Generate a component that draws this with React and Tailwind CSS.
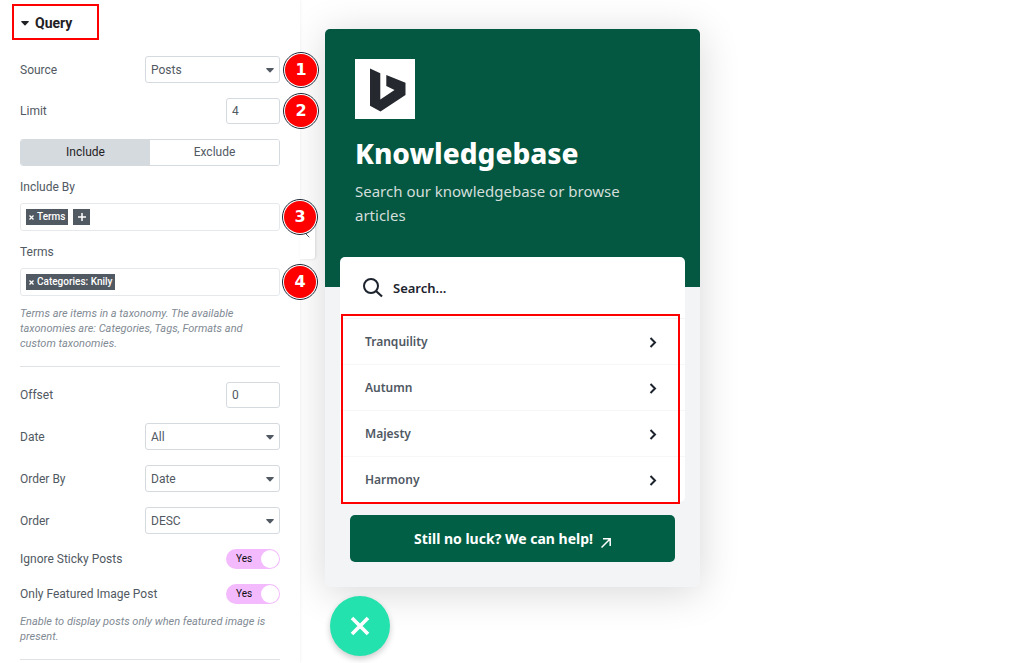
import { useState } from "react";

const posts = ["Tranquility", "Autumn", "Majesty", "Harmony"];

function Badge({ children }) {
  return (
    <span className="absolute left-full top-1/2 z-20 ml-[3px] flex size-9 -translate-y-1/2 items-center justify-center rounded-full border border-[#1f2937] bg-white p-px">
      <span className="flex size-full items-center justify-center rounded-full bg-[#fe0000] font-['DejaVu_Sans',sans-serif] text-base font-bold leading-none text-white">
        {children}
      </span>
    </span>
  );
}

function Caret({ className }) {
  return (
    <svg viewBox="0 0 8 5" className={`h-[5px] w-2 ${className}`}>
      <path d="M0.6 0h6.8q.7.2.2.9L4.5 4.3q-.5.4-1 0L.4.9Q-.1.2.6 0z" />
    </svg>
  );
}

function SelectRow({ id, label, options, badge }) {
  return (
    <div className="relative flex items-center justify-between">
      <label htmlFor={id}>{label}</label>
      <div className="relative w-[135px]">
        <select
          id={id}
          className="block h-[27px] w-full appearance-none rounded-[3px] border border-[#d5dadf] bg-white px-[5px]"
        >
          {options.map((option) => (
            <option key={option}>{option}</option>
          ))}
        </select>
        <Caret className="pointer-events-none absolute right-1.5 top-3 fill-[#515962]" />
      </div>
      {badge && <Badge>{badge}</Badge>}
    </div>
  );
}

function NumberRow({ id, label, value, badge }) {
  return (
    <div className="relative flex items-center justify-between">
      <label htmlFor={id}>{label}</label>
      <input
        id={id}
        type="text"
        inputMode="numeric"
        defaultValue={value}
        className="h-[26px] w-[54px] rounded-[3px] border border-[#d5dadf] px-[5px]"
      />
      {badge && <Badge>{badge}</Badge>}
    </div>
  );
}

function SwitchRow({ id, label }) {
  return (
    <div className="flex h-5 items-center justify-between">
      <label htmlFor={id}>{label}</label>
      <label className="relative flex h-5 w-[54px] cursor-pointer items-center rounded-full bg-[#f3bafd] pl-2.5 text-[10px] text-[#0c0d0e]">
        <input
          id={id}
          type="checkbox"
          defaultChecked
          className="peer absolute inset-0 m-0 size-full cursor-pointer appearance-none"
        />
        Yes
        <span className="pointer-events-none absolute left-px top-px size-[18px] rounded-full bg-white peer-checked:left-[35px]" />
      </label>
    </div>
  );
}

function Tag({ children }) {
  return (
    <button
      type="button"
      className="flex h-4 items-center gap-[3px] bg-[#515962] px-[3px] text-[10px] font-medium leading-none text-white"
    >
      <svg viewBox="0 0 5 5" className="size-[5px] stroke-white">
        <path d="M.5.5l4 4M4.5.5l-4 4" strokeWidth="1.3" />
      </svg>
      {children}
    </button>
  );
}

function TagField({ label, badge, children }) {
  return (
    <div role="group" aria-label={label}>
      <p className="leading-3">{label}</p>
      <div className="relative mt-2.5 flex h-7 items-center gap-[5px] rounded-[3px] border border-[#e6e9ec] px-[5px]">
        {children}
        <Badge>{badge}</Badge>
      </div>
    </div>
  );
}

function Hint({ children }) {
  return (
    <p className="mt-2.5 text-[11px] italic leading-[15px] text-[#818a93]">
      {children}
    </p>
  );
}

function QueryPanel() {
  const [mode, setMode] = useState("Include");

  return (
    <aside className="relative z-10 w-[300px] shrink-0 bg-white px-5 pt-1 font-['Roboto',sans-serif] text-xs text-[#515962] shadow-[0_0_3px_rgba(0,0,0,0.08)]">
      <button
        type="button"
        className="-ml-2 flex h-9 w-[87px] items-center gap-1.5 border-2 border-[#fe0000] pl-[7px] pt-0.5 text-sm font-bold text-[#1f2124]"
      >
        <Caret className="fill-[#1f2124]" />
        Query
      </button>

      <div className="mt-4 flex flex-col gap-[15px]">
        <SelectRow id="source" label="Source" options={["Posts", "Pages"]} badge="1" />
        <NumberRow id="limit" label="Limit" value="4" badge="2" />

        <div className="grid h-[27px] grid-cols-2 overflow-hidden rounded-[3px] border border-[#d5dadf]">
          {["Include", "Exclude"].map((name) => (
            <button
              key={name}
              type="button"
              aria-pressed={mode === name}
              onClick={() => setMode(name)}
              className={
                mode === name
                  ? "bg-[#d5dadf] pb-0.5 text-[#1f2124]"
                  : "bg-white pb-0.5"
              }
            >
              {name}
            </button>
          ))}
        </div>

        <TagField label="Include By" badge="3">
          <Tag>Terms</Tag>
          <button
            type="button"
            aria-label="Add"
            className="flex h-4 w-[17px] items-center justify-center bg-[#515962]"
          >
            <svg viewBox="0 0 8 8" className="size-2 stroke-white">
              <path d="M4 0v8M0 4h8" strokeWidth="1.5" />
            </svg>
          </button>
        </TagField>

        <div>
          <TagField label="Terms" badge="4">
            <Tag>Categories: Knily</Tag>
          </TagField>
          <Hint>
            Terms are items in a taxonomy. The available taxonomies are:
            Categories, Tags, Formats and custom taxonomies.
          </Hint>
        </div>

        <hr className="border-[#e0e3e6]" />

        <NumberRow id="offset" label="Offset" value="0" />
        <SelectRow id="date" label="Date" options={["All", "Past Day", "Past Week"]} />
        <SelectRow id="orderby" label="Order By" options={["Date", "Title"]} />
        <SelectRow id="order" label="Order" options={["DESC", "ASC"]} />
        <SwitchRow id="sticky" label="Ignore Sticky Posts" />
        <div>
          <SwitchRow id="featured" label="Only Featured Image Post" />
          <Hint>
            Enable to display posts only when featured image is present.
          </Hint>
        </div>

        <hr className="border-[#e0e3e6]" />
      </div>

      <button
        type="button"
        aria-label="Collapse panel"
        className="absolute left-full top-[209px] flex h-[50px] w-[15px] items-center justify-center rounded-r-[3px] bg-white shadow-[1px_0_3px_rgba(0,0,0,0.12)]"
      >
        <svg viewBox="0 0 5 8" className="h-2 w-[5px] fill-none stroke-[#515962]">
          <path d="M4.3.7L1 4l3.3 3.3" />
        </svg>
      </button>
    </aside>
  );
}

function KnowledgeCard() {
  return (
    <section className="w-[375px] rounded-[5px] bg-[#f3f4f6] pb-[25px] shadow-[0_5px_40px_rgba(0,0,0,0.16)]">
      <header className="rounded-t-[5px] bg-[#045740] px-[30px] pb-[60px] pt-[30px] text-white">
        <svg viewBox="0 0 60 60" className="size-[60px] bg-white">
          <path
            fill="#25282f"
            d="M15 9.5l10.3 4.7v26.3L39.5 31l-8.2-4V16L50.5 23.8V36L25.5 52.5 15 46.8z"
          />
        </svg>
        <h1 className="mt-4 text-[28px] font-extrabold leading-9">
          Knowledgebase
        </h1>
        <p className="mt-2 text-[15px] leading-6 text-[#d3dedb]">
          Search our knowledgebase or browse articles
        </p>
      </header>

      <div className="mx-[15px] -mt-[30px] rounded-[5px] bg-white">
        <label className="flex h-[62px] items-center gap-2.5 border-b border-[#f3f4f6] px-[23px]">
          <svg
            viewBox="0 0 20 20"
            className="size-5 shrink-0 fill-none stroke-[#1c232d] stroke-2"
          >
            <circle cx="8" cy="8" r="7" />
            <path d="M13 13l6 5.5" strokeWidth="2.2" />
          </svg>
          <input
            type="text"
            aria-label="Search"
            placeholder="Search..."
            className="w-full pt-0.5 text-[13px] font-semibold outline-none placeholder:text-[#1c232d]"
          />
        </label>
        <div className="relative">
          <ul>
            {posts.map((post) => (
              <li key={post} className="border-b border-[#f7f7f9] last:border-b-0">
                <a
                  href="#"
                  className="flex h-[45px] items-center justify-between px-[25px] text-xs font-semibold text-[#4f5863]"
                >
                  {post}
                  <svg
                    viewBox="0 0 14 14"
                    className="size-3.5 fill-none stroke-[#1c232d] stroke-2"
                  >
                    <path d="M4.5 3l4.5 4.5L4.5 12" />
                  </svg>
                </a>
              </li>
            ))}
          </ul>
          <span className="pointer-events-none absolute -bottom-0.5 -top-[5px] left-px right-[5px] border-2 border-[#fe0000]" />
        </div>
      </div>

      <a
        href="#"
        className="mx-[25px] mt-[13px] flex h-[47px] items-center justify-center gap-2 rounded-[5px] bg-[#005f45] text-sm font-bold text-white"
      >
        Still no luck? We can help!
        <svg
          viewBox="0 0 10 10"
          className="mt-2 size-2.5 fill-none stroke-white"
        >
          <path d="M.5 9.5L9 1M2 .8h7.2V8" strokeWidth="1.5" />
        </svg>
      </a>
    </section>
  );
}

function App() {
  return (
    <div className="flex min-h-screen overflow-hidden bg-white">
      <QueryPanel />
      <main className="flex-1 px-[25px] pt-[29px] font-['Noto_Sans',sans-serif]">
        <KnowledgeCard />
        <button
          type="button"
          aria-label="Close"
          className="ml-[5px] mt-[9px] flex size-[60px] items-center justify-center rounded-full bg-[#24e2ae] shadow-[0_3px_6px_rgba(0,0,0,0.2)]"
        >
          <svg viewBox="0 0 20 20" className="size-5 stroke-white">
            <path d="M2 2l16 16M18 2L2 18" strokeWidth="3.6" />
          </svg>
        </button>
      </main>
    </div>
  );
}

export default App;
